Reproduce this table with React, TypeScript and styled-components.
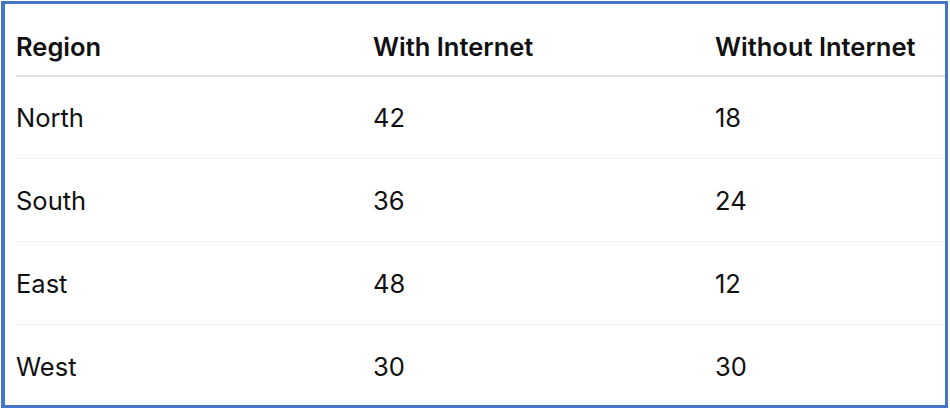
import React from "react";
import styled, { createGlobalStyle } from "styled-components";

const GlobalStyle = createGlobalStyle`
  html, body { margin: 0; padding: 0; background: #ffffff; }
  body { font-family: Inter, "Liberation Sans", Arial, sans-serif; color: #111111; }
`;

const Frame = styled.div`
  box-sizing: border-box;
  margin: 1px 0 0 1px;
  width: 947px;
  height: 407px;
  border: 3px solid #4674c6;
  border-left-width: 4px;
  padding: 14px 0 0 11px;
  overflow: hidden;
  background: #ffffff;
`;

const Table = styled.table`
  width: 929px;
  border-collapse: collapse;
  table-layout: fixed;
`;

const HeadCell = styled.th<{ $w?: number }>`
  width: ${(p) => (p.$w ? `${p.$w}px` : "auto")};
  height: 57px;
  padding: 0;
  text-align: left;
  vertical-align: middle;
  font-size: 25.5px;
  font-weight: 600;
  color: #111111;
  border-bottom: 2px solid #e0e0e0;
`;

const Row = styled.tr<{ $first?: boolean }>`
  border-bottom: 1px solid #f1f1f1;
  &:last-child { border-bottom: none; }
  & > td { height: ${(p) => (p.$first ? 81 : 82)}px; }
`;

const Cell = styled.td`
  padding: 0;
  vertical-align: middle;
  font-size: 25.5px;
  font-weight: 400;
  color: #111111;
`;

const rows = [
  ["North", "42", "18"],
  ["South", "36", "24"],
  ["East", "48", "12"],
  ["West", "30", "30"],
];

export default function App() {
  return (
    <>
      <GlobalStyle />
      <Frame>
        <Table>
          <thead>
            <tr>
              <HeadCell $w={357}>Region</HeadCell>
              <HeadCell $w={342}>With Internet</HeadCell>
              <HeadCell>Without Internet</HeadCell>
            </tr>
          </thead>
          <tbody>
            {rows.map((r, ri) => (
              <Row key={r[0]} $first={ri === 0}>
                {r.map((c, i) => (
                  <Cell key={i}>{c}</Cell>
                ))}
              </Row>
            ))}
          </tbody>
        </Table>
      </Frame>
    </>
  );
}
